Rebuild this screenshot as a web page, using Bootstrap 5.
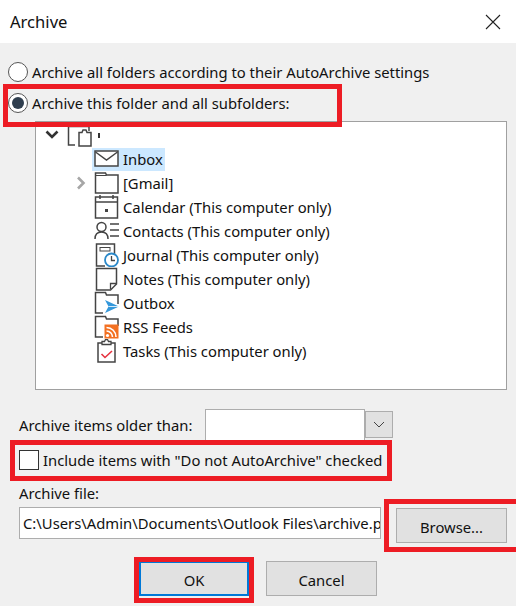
<!DOCTYPE html>
<html lang="en">
<head>
  <meta charset="UTF-8" />
  <title>Archive</title>
  <link href="https://cdn.jsdelivr.net/npm/bootstrap@5.3.0/dist/css/bootstrap.min.css" rel="stylesheet" />
  <style>
    body { background: #f0f0f0; color: #111; font-family: "Noto Sans", sans-serif; font-size: 14.8px; line-height: 20px; height: 606px; overflow: hidden; position: relative; }
    .title-strip { height: 43px; background: #fff; padding: 0 15px 0 10px; font-size: 16.6px; }
    .radio-line { height: 31px; padding-left: 8px; gap: 4px; }
    .radio-top { margin-top: 13px; }
    .radio-dot { width: 20px; height: 20px; border: 1px solid #555; border-radius: 50%; background: #fff; flex: none; display: flex; align-items: center; justify-content: center; }
    .radio-dot i { width: 12px; height: 12px; border-radius: 50%; background: #2f3e4e; }
    .tree-box { height: 269px; margin: 3px 9px 0 35px; background: #fff; border: 1px solid #a0a0a0; padding-top: 1px; }
    .tree-row { height: 24px; }
    .tree-arrow { width: 58px; flex: none; display: flex; justify-content: flex-end; padding-right: 8px; }
    .tree-arrow-root { width: 31px; }
    .tree-icon { width: 26px; height: 24px; flex: none; margin-right: 1px; }
    .tree-label { padding: 0 2px; height: 24px; line-height: 24px; }
    .tree-on { background: #cce8ff; margin-left: -2px; padding-left: 2px; height: 23px; }
    .root-tick { width: 2px; height: 5px; background: #333; margin-left: 4px; }
    .age-line { margin: 19px 0 0 19px; height: 31px; }
    .age-label { width: 186px; }
    .age-input { width: 160px; height: 31px; background: #fff; border: 1px solid #adadad; border-bottom: 0; }
    .age-drop { width: 28px; height: 27px; background: #e1e1e1; border: 1px solid #adadad; margin-top: 2px; display: flex; align-items: center; justify-content: center; }
    .check-line { margin: 9px 0 0 19px; height: 21px; gap: 4px; }
    .check-box-w { width: 20px; height: 20px; background: #fff; border: 1px solid #333; flex: none; }
    .file-label { margin: 13px 0 0 19px; height: 20px; line-height: 20px; }
    .file-line { margin: 4px 9px 0 19px; }
    .file-input { width: 362px; height: 32px; background: #fff; border: 1px solid #adadad; padding: 0 0 0 3px; line-height: 31px; overflow: hidden; white-space: nowrap; flex: none; }
    .win-btn { background: #e1e1e1; border: 1px solid #adadad; border-radius: 0; color: #111; font-size: 14.8px; padding: 3px 0 0; display: flex; align-items: center; justify-content: center; }
    .browse-btn { width: 111px; height: 35px; margin: 1px 0 0 15px; }
    .foot-line { margin: 18px 0 0 139px; gap: 17px; }
    .foot-btn { width: 111px; height: 35px; }
    .foot-btn.active-btn { border: 2px solid #0078d7; width: 110px; }
    .red-mark { position: absolute; border: 5px solid #ed1c24; pointer-events: none; }
    .mark-radio { left: 3px; top: 84px; width: 339px; height: 43px; }
    .mark-check { left: 10px; top: 440px; width: 382px; height: 41px; }
    .mark-browse { left: 384px; top: 499px; width: 140px; height: 53px; }
    .mark-ok { left: 134px; top: 557px; width: 120px; height: 46px; }
  </style>
</head>
<body>
  <div class="title-strip d-flex align-items-center justify-content-between">
    <span>Archive</span>
    <svg width="16" height="16" viewBox="0 0 16 16"><path d="M1 1l14 14M15 1L1 15" stroke="#222" stroke-width="1.1" fill="none"/></svg>
  </div>

  <div class="radio-top">
    <div class="radio-line d-flex align-items-center"><span class="radio-dot"></span><span>Archive all folders according to their AutoArchive settings</span></div>
    <div class="radio-line d-flex align-items-center"><span class="radio-dot"><i></i></span><span>Archive this folder and all subfolders:</span></div>
  </div>

  <div class="tree-box">
    <!-- root -->
    <div class="tree-row d-flex align-items-center">
      <div class="tree-arrow tree-arrow-root">
        <svg width="14" height="10" viewBox="0 0 14 10"><path d="M1.500 1.500L7 7l5.500-5.500" stroke="#333" stroke-width="2.600" fill="none"/></svg>
      </div>
      <svg class="tree-icon" viewBox="0 0 26 24"><path d="M8 22H1.500V3.500H22V8" fill="none" stroke="#444" stroke-width="1.500"/><path d="M12 9.500h3l1-2.500h3l1 2.500h4V23H12z" fill="#fff" stroke="#444" stroke-width="1.500"/></svg>
      <span class="root-tick"></span>
    </div>
    <!-- Inbox -->
    <div class="tree-row d-flex align-items-center">
      <div class="tree-arrow"></div>
      <span class="tree-on d-flex align-items-center">
        <svg class="tree-icon" viewBox="0 0 26 24"><rect x="1" y="4" width="23" height="15" fill="#fff" stroke="#444" stroke-width="1.500"/><path d="M1.500 5l11 8 11-8" fill="none" stroke="#444" stroke-width="1.500"/></svg>
        <span class="tree-label">Inbox</span>
      </span>
    </div>
    <!-- Gmail -->
    <div class="tree-row d-flex align-items-center">
      <div class="tree-arrow"><svg width="10" height="14" viewBox="0 0 10 14"><path d="M2 1.500L7.500 7 2 12.500" stroke="#a6a6a6" stroke-width="2.600" fill="none"/></svg></div>
      <svg class="tree-icon" viewBox="0 0 26 24"><path d="M1.500 22V2h10l1 2H24v18z" fill="#fff" stroke="#444" stroke-width="1.500"/><path d="M1.500 4.500h11" stroke="#444"/></svg>
      <span class="tree-label">[Gmail]</span>
    </div>
    <!-- Calendar -->
    <div class="tree-row d-flex align-items-center">
      <div class="tree-arrow"></div>
      <svg class="tree-icon" viewBox="0 0 26 24"><rect x="1.500" y="2" width="22" height="21" fill="#fff" stroke="#444" stroke-width="1.500"/><path d="M1.500 7h22M6 0v4M19 0v4" stroke="#444" stroke-width="1.500"/><rect x="11" y="14" width="3" height="3" fill="#444"/></svg>
      <span class="tree-label">Calendar (This computer only)</span>
    </div>
    <!-- Contacts -->
    <div class="tree-row d-flex align-items-center">
      <div class="tree-arrow"></div>
      <svg class="tree-icon" viewBox="0 0 26 24"><circle cx="7.500" cy="8" r="4.500" fill="none" stroke="#444" stroke-width="1.500"/><path d="M1 20c0-5 3-7 6.500-7s6.500 2 6.500 7" fill="none" stroke="#444" stroke-width="1.500"/><path d="M16 5h9M16 11h9M16 17h9" stroke="#444" stroke-width="1.500"/></svg>
      <span class="tree-label">Contacts (This computer only)</span>
    </div>
    <!-- Journal -->
    <div class="tree-row d-flex align-items-center">
      <div class="tree-arrow"></div>
      <svg class="tree-icon" viewBox="0 0 26 24"><path d="M11 23H2.500V1h18v12" fill="#fff" stroke="#444" stroke-width="1.500"/><rect x="6" y="4.500" width="10" height="3.500" fill="none" stroke="#444"/><circle cx="17.500" cy="17" r="6.500" fill="#fff" stroke="#2b88c8" stroke-width="1.800"/><path d="M17.500 13v4.500h3.500" fill="none" stroke="#444" stroke-width="1.300"/></svg>
      <span class="tree-label">Journal (This computer only)</span>
    </div>
    <!-- Notes -->
    <div class="tree-row d-flex align-items-center">
      <div class="tree-arrow"></div>
      <svg class="tree-icon" viewBox="0 0 26 24"><path d="M2.500 1.500h20V17l-6 6H2.500z" fill="#fff" stroke="#444" stroke-width="1.500"/><path d="M16.500 22v-5.500h6" fill="none" stroke="#444" stroke-width="1.300"/></svg>
      <span class="tree-label">Notes (This computer only)</span>
    </div>
    <!-- Outbox -->
    <div class="tree-row d-flex align-items-center">
      <div class="tree-arrow"></div>
      <svg class="tree-icon" viewBox="0 0 26 24"><path d="M9 22H1.500V1.500h10l1 2.500H24v9" fill="#fff" stroke="#444" stroke-width="1.500"/><path d="M11 9l14 6.500-14 6.500 3.500-6.500z" fill="#3498db"/><path d="M14.500 15.500H25" stroke="#fff" stroke-width=".8"/></svg>
      <span class="tree-label">Outbox</span>
    </div>
    <!-- RSS -->
    <div class="tree-row d-flex align-items-center">
      <div class="tree-arrow"></div>
      <svg class="tree-icon" viewBox="0 0 26 24"><path d="M9 22H1.500V1.500h10l1 2.500H24v7" fill="#fff" stroke="#444" stroke-width="1.500"/><rect x="10.500" y="9.500" width="14" height="14" fill="#f37021"/><circle cx="13.500" cy="20.500" r="1.600" fill="#fff"/><path d="M12.500 16a6 6 0 0 1 6 6M12.500 12.500a9.500 9.500 0 0 1 9.500 9.500" fill="none" stroke="#fff" stroke-width="1.600"/></svg>
      <span class="tree-label">RSS Feeds</span>
    </div>
    <!-- Tasks -->
    <div class="tree-row d-flex align-items-center">
      <div class="tree-arrow"></div>
      <svg class="tree-icon" viewBox="0 0 26 24"><path d="M8 4H4v19h17V4h-4" fill="#fff" stroke="#444" stroke-width="1.500"/><path d="M8 5.500V2.500h2.500L11.500 0.500h2l1 2h2.500v3z" fill="#fff" stroke="#444" stroke-width="1.300"/><path d="M7.500 15l3.500 3.500 7-6.500" fill="none" stroke="#e5323f" stroke-width="1.600"/></svg>
      <span class="tree-label">Tasks (This computer only)</span>
    </div>
  </div>

  <div class="age-line d-flex align-items-center">
    <span class="age-label">Archive items older than:</span>
    <div class="age-input"></div>
    <div class="age-drop align-self-start"><svg width="12" height="7" viewBox="0 0 12 7"><path d="M1 1l5 5 5-5" stroke="#444" fill="none"/></svg></div>
  </div>

  <div class="check-line d-flex align-items-center">
    <span class="check-box-w"></span>
    <span>Include items with "Do not AutoArchive" checked</span>
  </div>

  <div class="file-label">Archive file:</div>
  <div class="file-line d-flex align-items-start">
    <div class="file-input">C:\Users\Admin\Documents\Outlook Files\archive.pst</div>
    <button type="button" class="btn win-btn browse-btn">Browse...</button>
  </div>

  <div class="foot-line d-flex">
    <button type="button" class="btn win-btn foot-btn active-btn">OK</button>
    <button type="button" class="btn win-btn foot-btn">Cancel</button>
  </div>

  <div class="red-mark mark-radio"></div>
  <div class="red-mark mark-check"></div>
  <div class="red-mark mark-browse"></div>
  <div class="red-mark mark-ok"></div>

  <script src="https://cdn.jsdelivr.net/npm/bootstrap@5.3.0/dist/js/bootstrap.bundle.min.js"></script>
</body>
</html>
